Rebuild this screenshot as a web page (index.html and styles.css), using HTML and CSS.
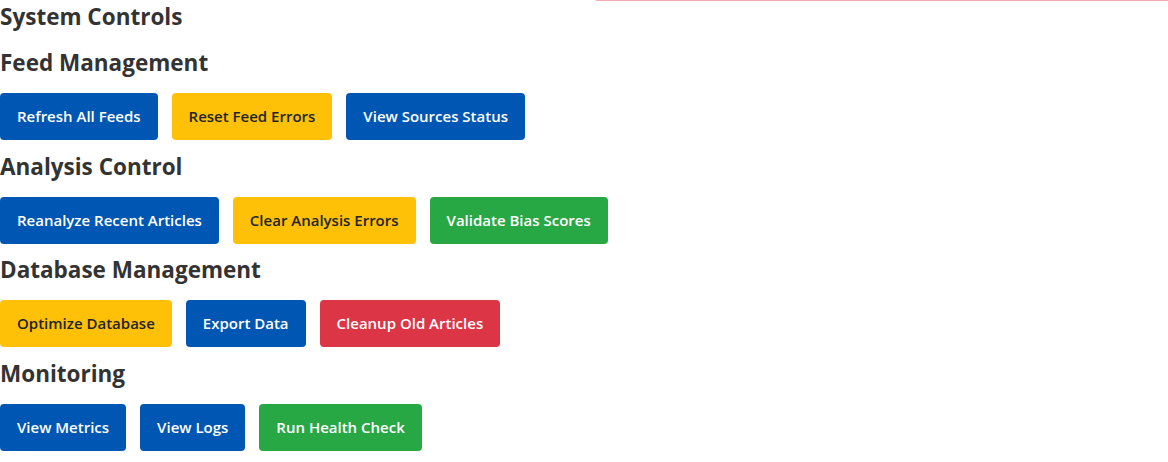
FILE: index.html
```html
<!DOCTYPE html>
<html lang="en">
<head>
<meta charset="utf-8">
<title>System Controls</title>
<link rel="stylesheet" href="styles.css">
</head>
<body>
<div class="toast-edge"></div>
<main class="controls">
  <h2 class="title">System Controls</h2>
  <section class="group">
    <h3 class="group-title">Feed Management</h3>
    <div class="actions">
      <button class="btn btn-primary">Refresh All Feeds</button>
      <button class="btn btn-warning">Reset Feed Errors</button>
      <button class="btn btn-primary">View Sources Status</button>
    </div>
  </section>
  <section class="group">
    <h3 class="group-title">Analysis Control</h3>
    <div class="actions">
      <button class="btn btn-primary">Reanalyze Recent Articles</button>
      <button class="btn btn-warning">Clear Analysis Errors</button>
      <button class="btn btn-success">Validate Bias Scores</button>
    </div>
  </section>
  <section class="group">
    <h3 class="group-title">Database Management</h3>
    <div class="actions">
      <button class="btn btn-warning">Optimize Database</button>
      <button class="btn btn-primary">Export Data</button>
      <button class="btn btn-danger">Cleanup Old Articles</button>
    </div>
  </section>
  <section class="group">
    <h3 class="group-title">Monitoring</h3>
    <div class="actions">
      <button class="btn btn-primary">View Metrics</button>
      <button class="btn btn-primary">View Logs</button>
      <button class="btn btn-success">Run Health Check</button>
    </div>
  </section>
</main>
</body>
</html>
```
FILE: styles.css
```css
html, body {
  margin: 0;
  padding: 0;
  background: #ffffff;
}
body {
  font-family: "Open Sans", "Noto Sans", sans-serif;
  color: #333333;
  position: relative;
}
.toast-edge {
  position: absolute;
  top: 0;
  left: 596px;
  right: 0;
  height: 1px;
  background: #f1aeb5;
}
.controls {
  display: flex;
  flex-direction: column;
}
.title {
  font-size: 22.5px;
  line-height: 29px;
  font-weight: 700;
  margin: 2px 0 17px;
}
.group {
  display: flex;
  flex-direction: column;
  margin-bottom: 11.7px;
}
.group-title {
  font-size: 22.5px;
  line-height: 29px;
  font-weight: 700;
  margin: 0 0 16px;
}
.actions {
  display: flex;
  gap: 14px;
}
.btn {
  font-family: inherit;
  font-size: 15px;
  font-weight: 600;
  line-height: 23px;
  padding: 12px 17px;
  border: none;
  border-radius: 4px;
  cursor: pointer;
}
.btn-primary { background: #0056b3; color: #ffffff; }
.btn-warning { background: #ffc107; color: #212529; }
.btn-success { background: #28a745; color: #ffffff; }
.btn-danger { background: #dc3545; color: #ffffff; }
```
